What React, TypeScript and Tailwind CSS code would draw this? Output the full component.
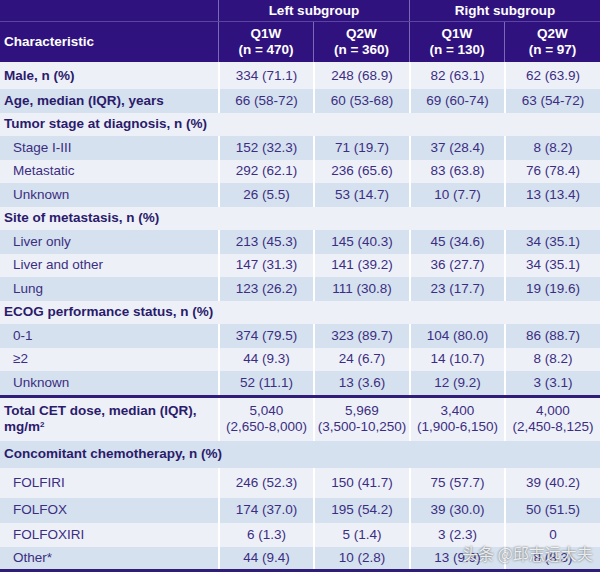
const cols = 'grid grid-cols-[218px_95px_96px_95px_96px]';

type Row = {
  label: string;
  values?: string[];
  kind: 'bold' | 'sub' | 'section';
  blue: boolean;
  h: string;
};

const top: Row[] = [
  { label: 'Male, n (%)', values: ['334 (71.1)', '248 (68.9)', '82 (63.1)', '62 (63.9)'], kind: 'bold', blue: false, h: 'h-[27px]' },
  { label: 'Age, median (IQR), years', values: ['66 (58-72)', '60 (53-68)', '69 (60-74)', '63 (54-72)'], kind: 'bold', blue: true, h: 'h-[23.5px]' },
  { label: 'Tumor stage at diagnosis, n (%)', kind: 'section', blue: false, h: 'h-[23.5px]' },
  { label: 'Stage I-III', values: ['152 (32.3)', '71 (19.7)', '37 (28.4)', '8 (8.2)'], kind: 'sub', blue: true, h: 'h-[23.5px]' },
  { label: 'Metastatic', values: ['292 (62.1)', '236 (65.6)', '83 (63.8)', '76 (78.4)'], kind: 'sub', blue: false, h: 'h-[23.5px]' },
  { label: 'Unknown', values: ['26 (5.5)', '53 (14.7)', '10 (7.7)', '13 (13.4)'], kind: 'sub', blue: true, h: 'h-[23.5px]' },
  { label: 'Site of metastasis, n (%)', kind: 'section', blue: false, h: 'h-[23.5px]' },
  { label: 'Liver only', values: ['213 (45.3)', '145 (40.3)', '45 (34.6)', '34 (35.1)'], kind: 'sub', blue: true, h: 'h-[23.5px]' },
  { label: 'Liver and other', values: ['147 (31.3)', '141 (39.2)', '36 (27.7)', '34 (35.1)'], kind: 'sub', blue: false, h: 'h-[23.5px]' },
  { label: 'Lung', values: ['123 (26.2)', '111 (30.8)', '23 (17.7)', '19 (19.6)'], kind: 'sub', blue: true, h: 'h-[23.5px]' },
  { label: 'ECOG performance status, n (%)', kind: 'section', blue: false, h: 'h-[23.5px]' },
  { label: '0-1', values: ['374 (79.5)', '323 (89.7)', '104 (80.0)', '86 (88.7)'], kind: 'sub', blue: true, h: 'h-[23.5px]' },
  { label: '≥2', values: ['44 (9.3)', '24 (6.7)', '14 (10.7)', '8 (8.2)'], kind: 'sub', blue: false, h: 'h-[23.5px]' },
  { label: 'Unknown', values: ['52 (11.1)', '13 (3.6)', '12 (9.2)', '3 (3.1)'], kind: 'sub', blue: true, h: 'h-[23.5px]' },
];

const bottom: Row[] = [
  { label: 'Concomitant chemotherapy, n (%)', kind: 'section', blue: true, h: 'h-[27px]' },
  { label: 'FOLFIRI', values: ['246 (52.3)', '150 (41.7)', '75 (57.7)', '39 (40.2)'], kind: 'sub', blue: false, h: 'h-[30px]' },
  { label: 'FOLFOX', values: ['174 (37.0)', '195 (54.2)', '39 (30.0)', '50 (51.5)'], kind: 'sub', blue: true, h: 'h-[25px]' },
  { label: 'FOLFOXIRI', values: ['6 (1.3)', '5 (1.4)', '3 (2.3)', '0'], kind: 'sub', blue: false, h: 'h-[24px]' },
  { label: 'Other*', values: ['44 (9.4)', '10 (2.8)', '13 (9.9)', '8 (8.3)'], kind: 'sub', blue: true, h: 'h-[22px]' },
];

function DataRow({ row }: { row: Row }) {
  const bg = row.blue ? 'bg-[#d5e1ee]' : 'bg-[#eef0f7]';
  if (row.kind === 'section') {
    return (
      <div className={`${row.h} ${bg} flex items-center pl-[4px] font-bold text-[#2b1b6c]`}>
        {row.label}
      </div>
    );
  }
  return (
    <div className={`${cols} ${row.h} ${bg}`}>
      <div
        className={
          row.kind === 'bold'
            ? 'flex items-center pl-[4px] font-bold text-[#2b1b6c]'
            : 'flex items-center pl-[13px] text-[#3b2e82]'
        }
      >
        {row.label}
      </div>
      {row.values?.map((v, i) => (
        <div key={i} className="flex items-center justify-center border-l-2 border-white text-[#3b2e82]">
          {v}
        </div>
      ))}
    </div>
  );
}

export default function App() {
  return (
    <div className="relative w-[600px] h-[573px] bg-white text-[13.5px] font-['Liberation_Sans',Arial,sans-serif] leading-[16px]">
      {/* header */}
      <div className="bg-[#30127e] text-white font-bold">
        <div className={`${cols} h-[22px] border-b border-[#5a46a0]`}>
          <div />
          <div className="col-span-2 flex items-center justify-center border-l border-[#7a68b8]">Left subgroup</div>
          <div className="col-span-2 flex items-center justify-center border-l border-[#7a68b8]">Right subgroup</div>
        </div>
        <div className={`${cols} h-[40px]`}>
          <div className="flex items-center pl-[4px]">Characteristic</div>
          {['(n = 470)', '(n = 360)', '(n = 130)', '(n = 97)'].map((n, i) => (
            <div key={i} className="flex flex-col items-center justify-center border-l border-[#7a68b8]">
              <span>{i % 2 === 0 ? 'Q1W' : 'Q2W'}</span>
              <span>{n}</span>
            </div>
          ))}
        </div>
      </div>

      {top.map((r, i) => (
        <DataRow key={i} row={r} />
      ))}

      <div className="h-[3px] bg-[#2f1d78]" />

      <div className={`${cols} h-[43px] bg-[#eef0f7]`}>
        <div className="flex flex-col justify-center pl-[4px] font-bold text-[#2b1b6c]">
          <span>Total CET dose, median (IQR),</span>
          <span>
            mg/m<sup className="text-[8px]">2</sup>
          </span>
        </div>
        {[
          ['5,040', '(2,650-8,000)'],
          ['5,969', '(3,500-10,250)'],
          ['3,400', '(1,900-6,150)'],
          ['4,000', '(2,450-8,125)'],
        ].map(([a, b], i) => (
          <div key={i} className="flex flex-col items-center justify-center border-l-2 border-white text-[#3b2e82] whitespace-nowrap">
            <span>{a}</span>
            <span>{b}</span>
          </div>
        ))}
      </div>

      {bottom.map((r, i) => (
        <DataRow key={i} row={r} />
      ))}

      <div className="h-[3px] bg-[#2f1d78]" />

      <div className="absolute left-[462px] top-[544px] text-[16px] leading-[18px] text-white/85 font-['Noto_Sans_CJK_SC',sans-serif] [text-shadow:0_0_2px_rgba(60,60,60,0.9)]">
        头条 @邱志远大夫
      </div>
    </div>
  );
}
